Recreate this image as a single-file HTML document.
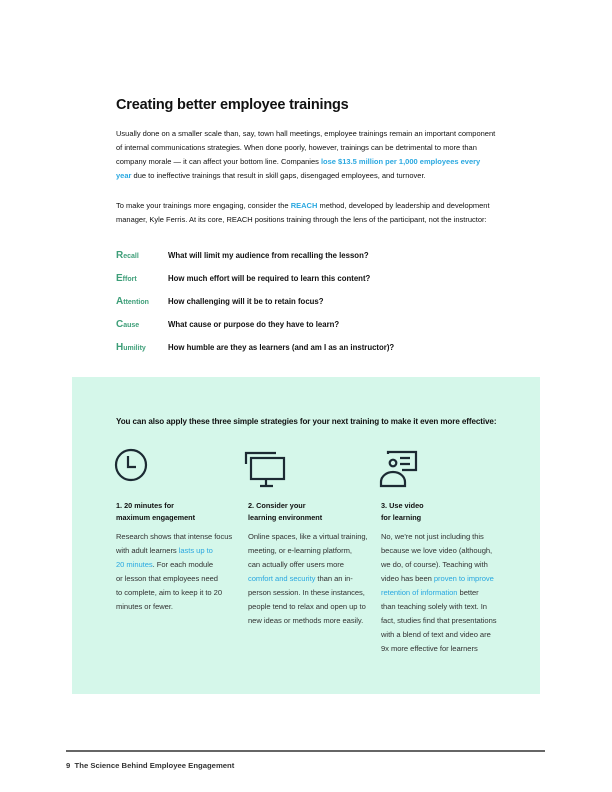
<!DOCTYPE html>
<html><head><meta charset="utf-8"><style>
*{margin:0;padding:0;box-sizing:border-box}
body{width:612px;height:792px;background:#fff;position:relative;font-family:"Liberation Sans",sans-serif;color:#111;overflow:hidden}
.a{position:absolute;white-space:nowrap}
h1{position:absolute;left:116px;top:97px;font-size:14.5px;font-weight:bold;letter-spacing:-0.2px}
.p{position:absolute;left:116px;font-size:7.5px;line-height:14px;white-space:nowrap}
.b{color:#2aa8e0;font-weight:bold}
.l{color:#2aa8e0}
.r{position:absolute;left:116px;font-size:7.8px;font-weight:bold;white-space:nowrap}
.r .k{color:#3d9e78;display:inline-block;width:52px;font-size:7px}
.r .k big{font-size:10px}
.box{position:absolute;left:72px;top:377px;width:468px;height:317px;background:#d5f7ea}
.h{position:absolute;font-size:7.3px;font-weight:bold;line-height:12px;white-space:nowrap}
.t{position:absolute;font-size:7.6px;line-height:14px;color:#333;white-space:nowrap;letter-spacing:-0.05px}
</style></head><body>
<h1>Creating better employee trainings</h1>
<div class="p" style="top:127px">Usually done on a smaller scale than, say, town hall meetings, employee trainings remain an important component<br>of internal communications strategies. When done poorly, however, trainings can be detrimental to more than<br>company morale — it can affect your bottom line. Companies <span class="b">lose $13.5 million per 1,000 employees every</span><br><span class="b">year</span> due to ineffective trainings that result in skill gaps, disengaged employees, and turnover.</div>
<div class="p" style="top:199px">To make your trainings more engaging, consider the <span class="b">REACH</span> method, developed by leadership and development<br>manager, Kyle Ferris. At its core, REACH positions training through the lens of the participant, not the instructor:</div>
<div class="r" style="top:250px"><span class="k"><big>R</big>ecall</span>What will limit my audience from recalling the lesson?</div>
<div class="r" style="top:273px"><span class="k"><big>E</big>ffort</span>How much effort will be required to learn this content?</div>
<div class="r" style="top:296px"><span class="k"><big>A</big>ttention</span>How challenging will it be to retain focus?</div>
<div class="r" style="top:319px"><span class="k"><big>C</big>ause</span>What cause or purpose do they have to learn?</div>
<div class="r" style="top:342px"><span class="k"><big>H</big>umility</span>How humble are they as learners (and am I as an instructor)?</div>
<div class="box"></div>
<div class="a" style="left:116px;top:417px;font-size:8.1px;font-weight:bold;letter-spacing:-0.1px">You can also apply these three simple strategies for your next training to make it even more effective:</div>
<svg class="a" style="left:112px;top:448px" width="40" height="40" viewBox="0 0 40 40" fill="none" stroke="#1c2a33" stroke-width="2.2"><circle cx="19" cy="17" r="15"/><path d="M16 8v11h8"/></svg>
<svg class="a" style="left:244px;top:450px" width="46" height="38" viewBox="0 0 46 38" fill="none" stroke="#1c2a33" stroke-width="2.2"><path d="M2 14V3h30"/><rect x="7" y="8" width="33" height="21"/><path d="M22 29v6M16 36h13"/></svg>
<svg class="a" style="left:378px;top:450px" width="44" height="38" viewBox="0 0 44 38" fill="none" stroke="#1c2a33" stroke-width="2.2"><path d="M10 4V2h28v18H24M22 8h10M22 14h10"/><circle cx="15" cy="13" r="3.3"/><path d="M3 36v-4a12 10 0 0 1 24 0v4z"/></svg>
<div class="h" style="left:116px;top:500px">1. 20 minutes for<br>maximum engagement</div>
<div class="h" style="left:248px;top:500px">2. Consider your<br>learning environment</div>
<div class="h" style="left:381px;top:500px">3. Use video<br>for learning</div>
<div class="t" style="left:116px;top:530px">Research shows that intense focus<br>with adult learners <span class="l">lasts up to</span><br><span class="l">20 minutes</span>. For each module<br>or lesson that employees need<br>to complete, aim to keep it to 20<br>minutes or fewer.</div>
<div class="t" style="left:248px;top:530px">Online spaces, like a virtual training,<br>meeting, or e-learning platform,<br>can actually offer users more<br><span class="l">comfort and security</span> than an in-<br>person session. In these instances,<br>people tend to relax and open up to<br>new ideas or methods more easily.</div>
<div class="t" style="left:381px;top:530px">No, we're not just including this<br>because we love video (although,<br>we do, of course). Teaching with<br>video has been <span class="l">proven to improve</span><br><span class="l">retention of information</span> better<br>than teaching solely with text. In<br>fact, studies find that presentations<br>with a blend of text and video are<br>9x more effective for learners</div>
<div class="a" style="left:66px;top:750px;width:479px;height:2px;background:#666"></div>
<div class="a" style="left:66px;top:761px;font-size:7.7px;font-weight:bold;color:#333">9 &nbsp;The Science Behind Employee Engagement</div>
</body></html>
